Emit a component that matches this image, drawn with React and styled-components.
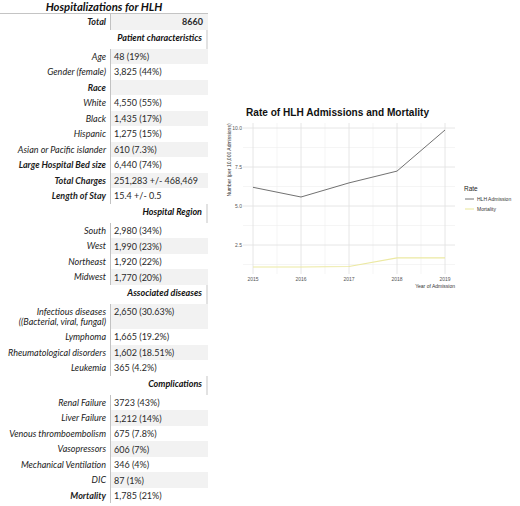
import React from 'react';
import styled, { createGlobalStyle } from 'styled-components';

const GlobalStyle = createGlobalStyle`
  html, body {
    margin: 0;
    padding: 0;
    background: #fff;
  }
  body {
    width: 520px;
    height: 506px;
    overflow: hidden;
    font-family: Lato, "Liberation Sans", sans-serif;
  }
`;

// rows of the table, in order
const rows = [
  { kind: 'total', label: 'Total', value: '8660' },
  { kind: 'head', value: 'Patient characteristics' },
  { label: 'Age', value: '48 (19%)', shade: true },
  { label: 'Gender (female)', value: '3,825 (44%)' },
  { label: 'Race', value: '', shade: true, bold: true },
  { label: 'White', value: '4,550 (55%)' },
  { label: 'Black', value: '1,435 (17%)', shade: true },
  { label: 'Hispanic', value: '1,275 (15%)' },
  { label: 'Asian or Pacific islander', value: '610 (7.3%)', shade: true },
  { label: 'Large Hospital Bed size', value: '6,440 (74%)', bold: true },
  { label: 'Total Charges', value: '251,283 +/- 468,469', bold: true, shade: true },
  { label: 'Length of Stay', value: '15.4 +/- 0.5', bold: true },
  { kind: 'head', value: 'Hospital Region' },
  { label: 'South', value: '2,980 (34%)' },
  { label: 'West', value: '1,990 (23%)', shade: true },
  { label: 'Northeast', value: '1,920 (22%)' },
  { label: 'Midwest', value: '1,770 (20%)', shade: true },
  { kind: 'head', value: 'Associated diseases' },
  { label: ['Infectious diseases', '((Bacterial, viral, fungal)'], value: '2,650 (30.63%)', shade: true },
  { label: 'Lymphoma', value: '1,665 (19.2%)' },
  { label: 'Rheumatological disorders', value: '1,602 (18.51%)', shade: true },
  { label: 'Leukemia', value: '365 (4.2%)' },
  { kind: 'head', value: 'Complications' },
  { label: 'Renal Failure', value: '3723 (43%)' },
  { label: 'Liver Failure', value: '1,212 (14%)', shade: true },
  { label: 'Venous thromboembolism', value: '675 (7.8%)' },
  { label: 'Vasopressors', value: '606 (7%)', shade: true },
  { label: 'Mechanical Ventilation', value: '346 (4%)' },
  { label: 'DIC', value: '87 (1%)', shade: true },
  { label: 'Mortality', value: '1,785 (21%)', bold: true },
];

const admissions = [6.2, 5.58, 6.48, 7.24, 9.87];
const mortality = [1.09, 1.09, 1.12, 1.67, 1.67];
const years = [2015, 2016, 2017, 2018, 2019];

const xOf = (i) => 253 + i * 48;
const yOf = (v) => 284 - 15.6 * v;
const toPoints = (vals) => vals.map((v, i) => `${xOf(i)},${yOf(v).toFixed(1)}`).join(' ');

function App() {
  return (
    <>
      <GlobalStyle />
      <Page>
        <Table>
          <Title>Hospitalizations for HLH</Title>
          {rows.map((row, i) => {
            if (row.kind === 'head') {
              return (
                <HeadRow key={i}>
                  <span />
                  <HeadCell>{row.value}</HeadCell>
                </HeadRow>
              );
            }
            const lines = Array.isArray(row.label) ? row.label : [row.label];
            const tall = lines.length > 1;
            return (
              <Row key={i} $tall={tall}>
                <Label $bold={row.bold || row.kind === 'total'} $tall={tall}>
                  {lines.map((l) => (
                    <span key={l}>{l}</span>
                  ))}
                </Label>
                <Value $shade={row.shade || row.kind === 'total'} $total={row.kind === 'total'} $tall={tall}>
                  {row.value}
                </Value>
              </Row>
            );
          })}
        </Table>

        <Chart>
          <ChartTitle>Rate of HLH Admissions and Mortality</ChartTitle>
          <svg width="310" height="178" viewBox="210 122 310 178">
            {/* minor grid */}
            {[1.25, 3.75, 6.25, 8.75].map((v) => (
              <line key={v} x1="243" x2="455" y1={yOf(v)} y2={yOf(v)} stroke="#f0f0f0" strokeWidth="0.7" />
            ))}
            {[0, 1, 2, 3].map((i) => (
              <line key={i} x1={xOf(i) + 24} x2={xOf(i) + 24} y1="123" y2="274" stroke="#f0f0f0" strokeWidth="0.7" />
            ))}
            {/* major grid */}
            {[2.5, 5, 7.5, 10].map((v) => (
              <line key={v} x1="243" x2="455" y1={yOf(v)} y2={yOf(v)} stroke="#e3e3e3" strokeWidth="0.9" />
            ))}
            {years.map((y, i) => (
              <line key={y} x1={xOf(i)} x2={xOf(i)} y1="123" y2="274" stroke="#e3e3e3" strokeWidth="0.9" />
            ))}

            <polyline points={toPoints(mortality)} fill="none" stroke="#ece9a2" strokeWidth="1.1" />
            <polyline points={toPoints(admissions)} fill="none" stroke="#4d4d4d" strokeWidth="0.8" />

            {/* axes text */}
            {['2.5', '5.0', '7.5', '10.0'].map((t, i) => (
              <AxisText key={t} x="242" y={yOf((i + 1) * 2.5) + 1.8} textAnchor="end">
                {t}
              </AxisText>
            ))}
            {years.map((y, i) => (
              <AxisText key={y} x={xOf(i)} y="281" textAnchor="middle">
                {y}
              </AxisText>
            ))}
            <SmallText x="455" y="288" textAnchor="end">Year of Admission</SmallText>
            <SmallText x="0" y="0" textAnchor="middle" transform="translate(231 160) rotate(-90)">
              Number (per 10,000 Admissions)
            </SmallText>

            {/* legend */}
            <LegendTitle x="464" y="191">Rate</LegendTitle>
            <line x1="465" x2="474" y1="199" y2="199" stroke="#4d4d4d" strokeWidth="0.8" />
            <SmallText x="477" y="201">HLH Admission</SmallText>
            <line x1="465" x2="474" y1="209" y2="209" stroke="#ece9a2" strokeWidth="1.1" />
            <SmallText x="477" y="211">Mortality</SmallText>
          </svg>
        </Chart>
      </Page>
    </>
  );
}

const Page = styled.div`
  display: flex;
  align-items: flex-start;
  width: 520px;
  height: 506px;
`;

const Table = styled.div`
  width: 208px;
  flex: none;
  color: #1c1c1c;
  font-size: 9px;
`;

const Title = styled.div`
  height: 13px;
  line-height: 13px;
  border-bottom: 1px solid #c4c4c4;
  text-align: center;
  font-size: 11.3px;
  font-weight: 700;
  font-style: italic;
  color: #111;
`;

const Row = styled.div`
  display: grid;
  grid-template-columns: 110px 1fr;
  height: ${(p) => (p.$tall ? '25px' : '15.5px')};
`;

const Label = styled.div`
  display: flex;
  flex-direction: column;
  justify-content: center;
  align-items: flex-end;
  padding-right: 4px;
  font-style: italic;
  font-weight: ${(p) => (p.$bold ? 700 : 400)};
  line-height: ${(p) => (p.$tall ? '10px' : '15.5px')};
  white-space: nowrap;
`;

const Value = styled.div`
  display: flex;
  align-items: ${(p) => (p.$tall ? 'flex-start' : 'center')};
  justify-content: ${(p) => (p.$total ? 'flex-end' : 'flex-start')};
  padding: ${(p) => (p.$tall ? '2px 5px 0 3px' : '0 5px 0 3px')};
  border-left: 1px solid #c2c2c2;
  background: ${(p) => (p.$shade ? '#f2f2f2' : '#fff')};
  font-weight: ${(p) => (p.$total ? 700 : 400)};
  color: #2a2a2a;
  white-space: nowrap;
`;

const HeadRow = styled.div`
  display: grid;
  grid-template-columns: 110px 1fr;
  height: 19.2px;
`;

const HeadCell = styled.div`
  text-align: right;
  padding-right: 4px;
  line-height: 15px;
  font-weight: 700;
  font-style: italic;
  border-right: 2px solid #e2e2e2;
  color: #111;
  white-space: nowrap;
`;

const Chart = styled.div`
  flex: none;
  width: 310px;
  margin-left: 2px;
  padding-top: 104px;
  font-family: "Liberation Sans", Arial, sans-serif;

  svg {
    display: block;
  }
`;

const ChartTitle = styled.div`
  height: 18px;
  line-height: 18px;
  padding-left: 36px;
  font-size: 10.1px;
  font-weight: 700;
  color: #111;
`;

const AxisText = styled.text`
  font-size: 5px;
  fill: #555;
`;

const SmallText = styled.text`
  font-size: 5px;
  fill: #333;
`;

const LegendTitle = styled.text`
  font-size: 6.5px;
  fill: #222;
`;

export default App;
